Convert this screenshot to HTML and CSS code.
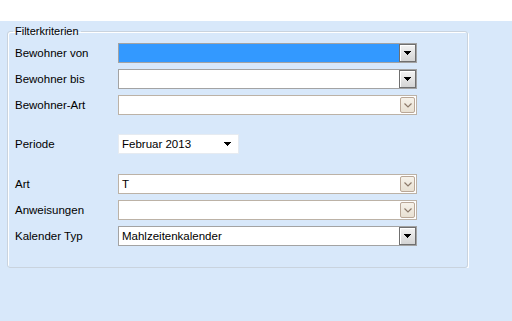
FILE: index.html
```html
<!DOCTYPE html>
<html>

<head>
    <meta charset="UTF-8">
    <title>Filterkriterien</title>
    <link rel="stylesheet" href="styles.css">
</head>

<body>
    <div class="topbar"></div>

    <fieldset class="group">
        <legend>Filterkriterien</legend>

        <div class="row">
            <label>Bewohner von</label>
            <div class="combo classic">
                <span class="value selected"></span>
                <span class="btn"><svg width="7" height="4" viewBox="0 0 7 4"><path d="M0 0h7v1H0zM1 1h5v1H1zM2 2h3v1H2zM3 3h1v1H3z" fill="#000"/></svg></span>
            </div>
        </div>
        <div class="row">
            <label>Bewohner bis</label>
            <div class="combo classic">
                <span class="value"></span>
                <span class="btn"><svg width="7" height="4" viewBox="0 0 7 4"><path d="M0 0h7v1H0zM1 1h5v1H1zM2 2h3v1H2zM3 3h1v1H3z" fill="#000"/></svg></span>
            </div>
        </div>
        <div class="row">
            <label>Bewohner-Art</label>
            <div class="combo xp">
                <span class="value"></span>
                <span class="btn"><svg width="8" height="5" viewBox="0 0 8 5"><path d="M0.5 0.5L4 4L7.5 0.5" fill="none" stroke="#8d7a6a" stroke-width="1.2"/></svg></span>
            </div>
        </div>

        <div class="row spaced">
            <label>Periode</label>
            <div class="picker">
                <span class="value">Februar 2013</span>
                <svg width="7" height="4" viewBox="0 0 7 4"><path d="M0 0h7v1H0zM1 1h5v1H1zM2 2h3v1H2zM3 3h1v1H3z" fill="#000"/></svg>
            </div>
        </div>

        <div class="row spaced wide">
            <label>Art</label>
            <div class="combo xp">
                <span class="value">T</span>
                <span class="btn"><svg width="8" height="5" viewBox="0 0 8 5"><path d="M0.5 0.5L4 4L7.5 0.5" fill="none" stroke="#8d7a6a" stroke-width="1.2"/></svg></span>
            </div>
        </div>
        <div class="row">
            <label>Anweisungen</label>
            <div class="combo xp">
                <span class="value"></span>
                <span class="btn"><svg width="8" height="5" viewBox="0 0 8 5"><path d="M0.5 0.5L4 4L7.5 0.5" fill="none" stroke="#8d7a6a" stroke-width="1.2"/></svg></span>
            </div>
        </div>
        <div class="row">
            <label>Kalender Typ</label>
            <div class="combo classic">
                <span class="value">Mahlzeitenkalender</span>
                <span class="btn"><svg width="7" height="4" viewBox="0 0 7 4"><path d="M0 0h7v1H0zM1 1h5v1H1zM2 2h3v1H2zM3 3h1v1H3z" fill="#000"/></svg></span>
            </div>
        </div>
    </fieldset>
</body>

</html>
```

FILE: styles.css
```css
body {
    margin: 0;
    background-color: #d8e8fa;
    font-family: "Liberation Sans", Arial, sans-serif;
    font-size: 11px;
    color: #000000;
}

.topbar {
    height: 21px;
    background-color: #ffffff;
}

.group {
    box-sizing: border-box;
    width: 461px;
    height: 243px;
    margin: 4px 0 0 7px;
    padding: 5px 0 0 7px;
    border: 1px solid #c9d3de;
    border-radius: 3px;
    box-shadow: 1px 1px 0 #ffffff, inset 1px 1px 0 #ffffff;
}

.group legend {
    padding: 0 2px;
    margin-left: -2px;
    line-height: 13px;
}

.row {
    display: flex;
    align-items: center;
    height: 20px;
    margin-bottom: 6px;
}

.row.spaced {
    margin-top: 19px;
}

.row.wide {
    margin-top: 20px;
}

.row label {
    width: 103px;
    font-size: 11.5px;
}

.combo {
    box-sizing: border-box;
    display: flex;
    width: 299px;
    height: 20px;
    background-color: #ffffff;
}

.combo .value {
    flex: 1;
    padding-left: 3px;
    line-height: 18px;
    font-size: 11.5px;
}

.combo .btn {
    box-sizing: border-box;
    display: flex;
    align-items: center;
    justify-content: center;
}

.classic {
    border: 1px solid #a3a3a3;
}

.classic .value.selected {
    background-color: #3399ff;
}

.classic .btn {
    width: 17px;
    border: 1px solid #6f6f6f;
    box-shadow: inset 1px 1px 0 #ffffff;
    background: linear-gradient(#f3f3f3, #d4d4d4);
}

.xp {
    border: 1px solid #bcb2a6;
    padding: 1px;
}

.xp .value {
    line-height: 16px;
    padding-left: 2px;
}

.xp .btn {
    width: 15px;
    border: 1px solid #b9a797;
    border-radius: 2px;
    background: linear-gradient(#f6f2ea, #e8e0d2);
}

.picker {
    box-sizing: border-box;
    display: flex;
    align-items: center;
    width: 121px;
    height: 20px;
    padding: 0 7px 0 3px;
    background-color: #ffffff;
    border: 1px solid #e6ebf1;
}

.picker .value {
    flex: 1;
    font-size: 11.5px;
}
```
